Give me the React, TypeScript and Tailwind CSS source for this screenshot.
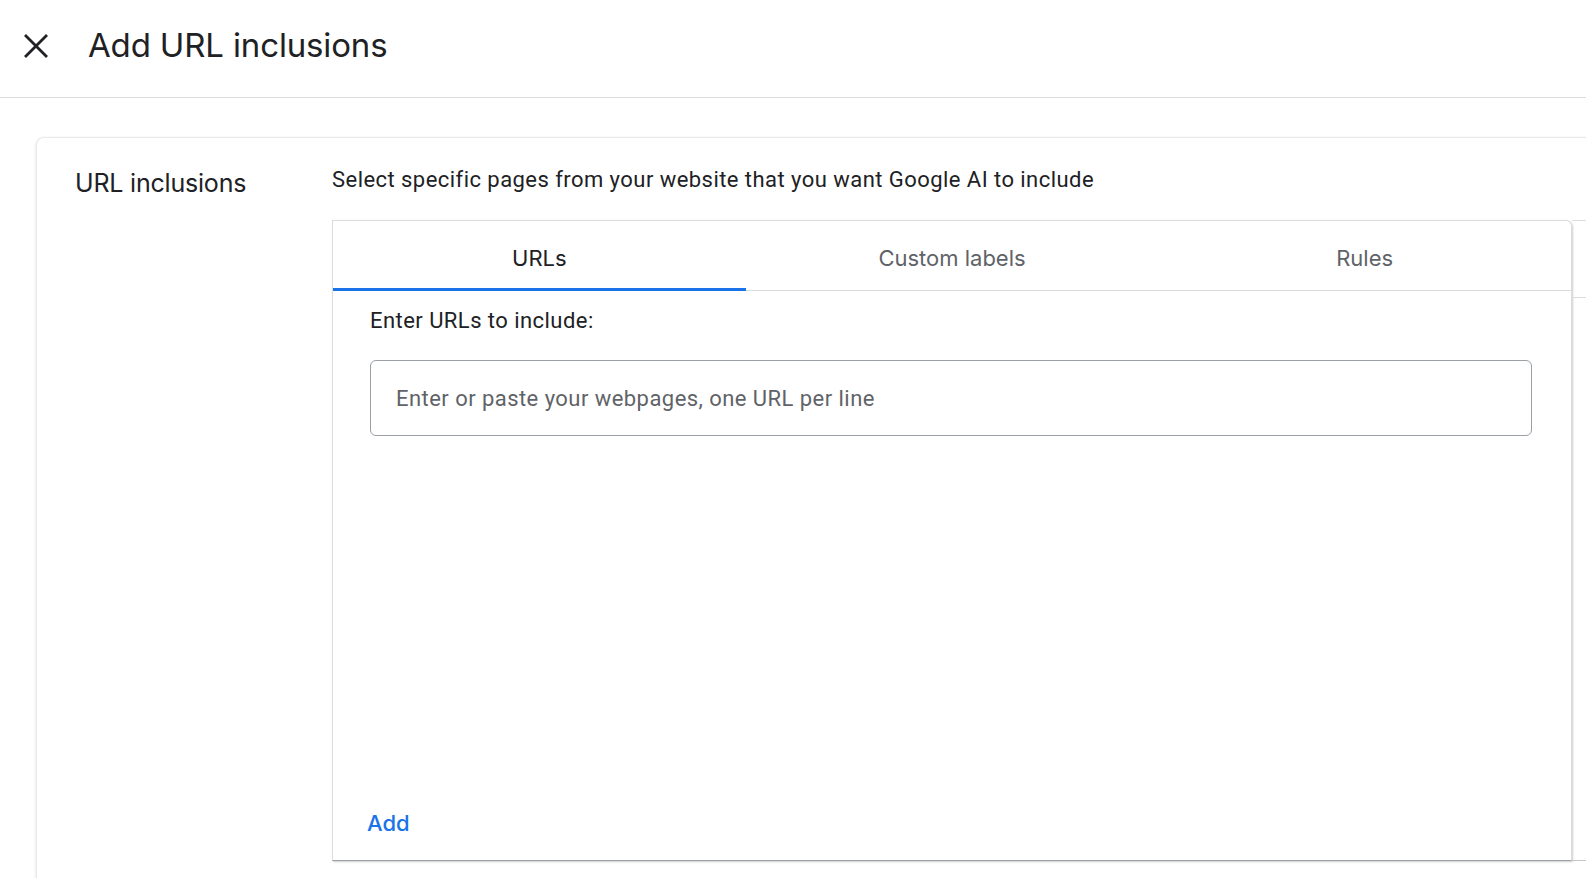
import { useState } from 'react'

const tabs = ['URLs', 'Custom labels', 'Rules']

export default function App() {
  const [active, setActive] = useState(0)

  return (
    <div className="h-[878px] w-full overflow-hidden bg-white font-['Roboto',sans-serif] text-[#202124]">
      {/* Header */}
      <div className="flex h-[98px] items-center border-b border-[#dadce0]">
        <button className="ml-[24px] mb-[5px] flex h-[24px] w-[24px] items-center justify-center text-[#202124]">
          <svg className="h-[24px] w-[24px]" viewBox="0 0 24 24" fill="none" stroke="currentColor" strokeWidth={2.8} strokeLinecap="square">
            <path d="M2 2 22 22M22 2 2 22" />
          </svg>
        </button>
        <h1 className="ml-[40px] mb-[6px] font-['Inter',sans-serif] text-[33px] font-normal tracking-[-0.15px] text-[#202124]">
          Add URL inclusions
        </h1>
      </div>

      {/* Outer card */}
      <div className="ml-[36px] mt-[39px] h-[900px] w-[1600px] rounded-tl-[8px] border-l border-t border-[#e8eaed] shadow-[0_1px_3px_rgba(60,64,67,0.18)]">
        <div className="flex pt-[26px]">
          <div className="w-[295px] shrink-0 pl-[38px] pt-[1px]">
            <h2 className="font-['Inter',sans-serif] text-[25px] font-normal tracking-[-0.2px] text-[#202124]">URL inclusions</h2>
          </div>

          <div className="flex-1">
            <p className="text-[22px] leading-[32px] tracking-[0.45px] text-[#202124]">
              Select specific pages from your website that you want Google AI to include
            </p>

            <div className="mt-[24px] flex">
              {/* Tabs card */}
              <div className="flex h-[641px] w-[1240px] shrink-0 flex-col rounded-tr-[6px] border border-[#dadce0] border-b-[#9aa0a6] shadow-[1px_1px_2px_rgba(60,64,67,0.25)]">
                <div className="flex h-[70px] border-b border-[#dadce0]">
                  {tabs.map((t, i) => (
                    <button
                      key={t}
                      onClick={() => setActive(i)}
                      className={
                        i === active
                          ? "relative flex flex-1 items-center justify-center pt-[6px] font-['Inter',sans-serif] text-[22px] text-[#202124]"
                          : "relative flex flex-1 items-center justify-center pt-[6px] font-['Inter',sans-serif] text-[22px] text-[#5f6368]"
                      }
                    >
                      {t}
                      {i === active && <span className="absolute bottom-[-1px] left-0 right-0 h-[3px] bg-[#1a73e8]" />}
                    </button>
                  ))}
                </div>

                <div className="flex flex-1 flex-col pl-[37px] pr-[39px] pt-[14px]">
                  <label className="text-[22px] leading-[32px] tracking-[0.45px] text-[#202124]">Enter URLs to include:</label>
                  <div className="mt-[23px] flex h-[76px] items-center rounded-[6px] border border-[#9aa0a6] px-[25px]">
                    <input
                      className="w-full bg-transparent text-[22px] tracking-[0.45px] text-[#202124] outline-none placeholder:text-[#5f6368]"
                      placeholder="Enter or paste your webpages, one URL per line"
                    />
                  </div>
                  <div className="flex-1" />
                  <button className="-ml-[3px] mb-[20px] self-start font-['Inter',sans-serif] text-[22px] font-medium text-[#1a73e8]">Add</button>
                </div>
              </div>

              {/* Panel behind */}
              <div className="flex h-[641px] flex-1 flex-col border-b border-t border-[#dadce0] border-b-[#c4c7c5]">
                <div className="h-[77px] border-b border-[#dadce0]" />
              </div>
            </div>
          </div>
        </div>
      </div>
    </div>
  )
}
